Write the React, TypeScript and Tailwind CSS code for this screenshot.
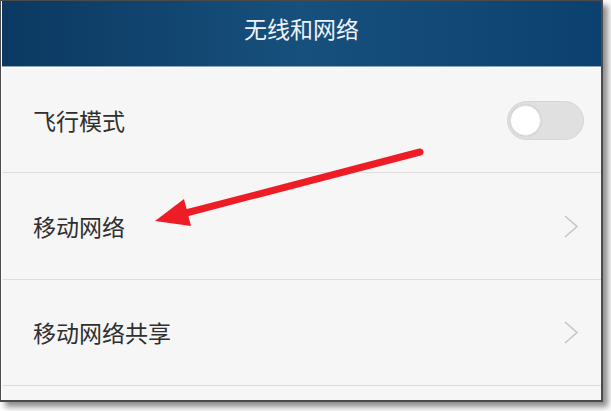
import React from 'react';

const FONT = '"Noto Sans CJK SC", "Noto Sans", sans-serif';

const Chevron = () => (
  <svg width="16" height="23" viewBox="0 0 16 23" fill="none">
    <polyline points="2,1 14,11.5 2,22" stroke="#c6c6c6" strokeWidth="1.6" />
  </svg>
);

const Toggle = () => (
  <div className="relative h-[39px] w-[77px] rounded-full border border-[#d6d6d6] bg-[#e0e0e0]">
    <div className="absolute left-[2px] top-[3px] h-[31px] w-[31px] rounded-full border border-[#e4e4e4] bg-white shadow-[0_0_2px_rgba(0,0,0,0.15)]" />
  </div>
);

const ROWS = [
  { label: '飞行模式', kind: 'toggle', h: 'h-[105px]' },
  { label: '移动网络', kind: 'link', h: 'h-[107px]' },
  { label: '移动网络共享', kind: 'link', h: 'h-[106px]' },
];

export default function App() {
  return (
    <div className="relative h-[411px] w-[611px] overflow-hidden bg-white" style={{ fontFamily: FONT }}>
      <div className="flex h-[402px] w-[603px] flex-col border-b-2 border-l border-r-2 border-t border-[#4a4a4a] bg-[#f6f6f6] shadow-[5px_5px_6px_rgba(0,0,0,0.45)]">
        <div className="flex flex-1 flex-col border-l border-white">
          {/* header */}
          <div className="flex h-[65px] justify-center bg-gradient-to-r from-[#0b3961] via-[#17507d] to-[#0c416f] pt-[13px]">
            <span className="text-[23px] leading-[28px] text-[#eef3f8]">无线和网络</span>
          </div>
          <div className="h-px bg-[#8ea6bb]" />
          <div className="h-px bg-white" />

          {ROWS.map(r => (
            <div
              key={r.label}
              className={`flex ${r.h} shrink-0 items-center justify-between border-b border-[#dedede] pl-[31px] ${
                r.kind === 'toggle' ? 'pr-[17px]' : 'pr-[22px]'
              }`}
            >
              <span className="text-[23px] leading-none text-[#2f2f2f]">{r.label}</span>
              {r.kind === 'toggle' ? <Toggle /> : <Chevron />}
            </div>
          ))}
        </div>
      </div>

      {/* annotation arrow */}
      <svg className="pointer-events-none absolute left-0 top-0" width="611" height="411">
        <line x1="420" y1="152" x2="186" y2="213" stroke="#ee1c25" strokeWidth="7" strokeLinecap="round" />
        <polygon points="155,221 184,199 191,226" fill="#ee1c25" />
      </svg>
    </div>
  );
}
